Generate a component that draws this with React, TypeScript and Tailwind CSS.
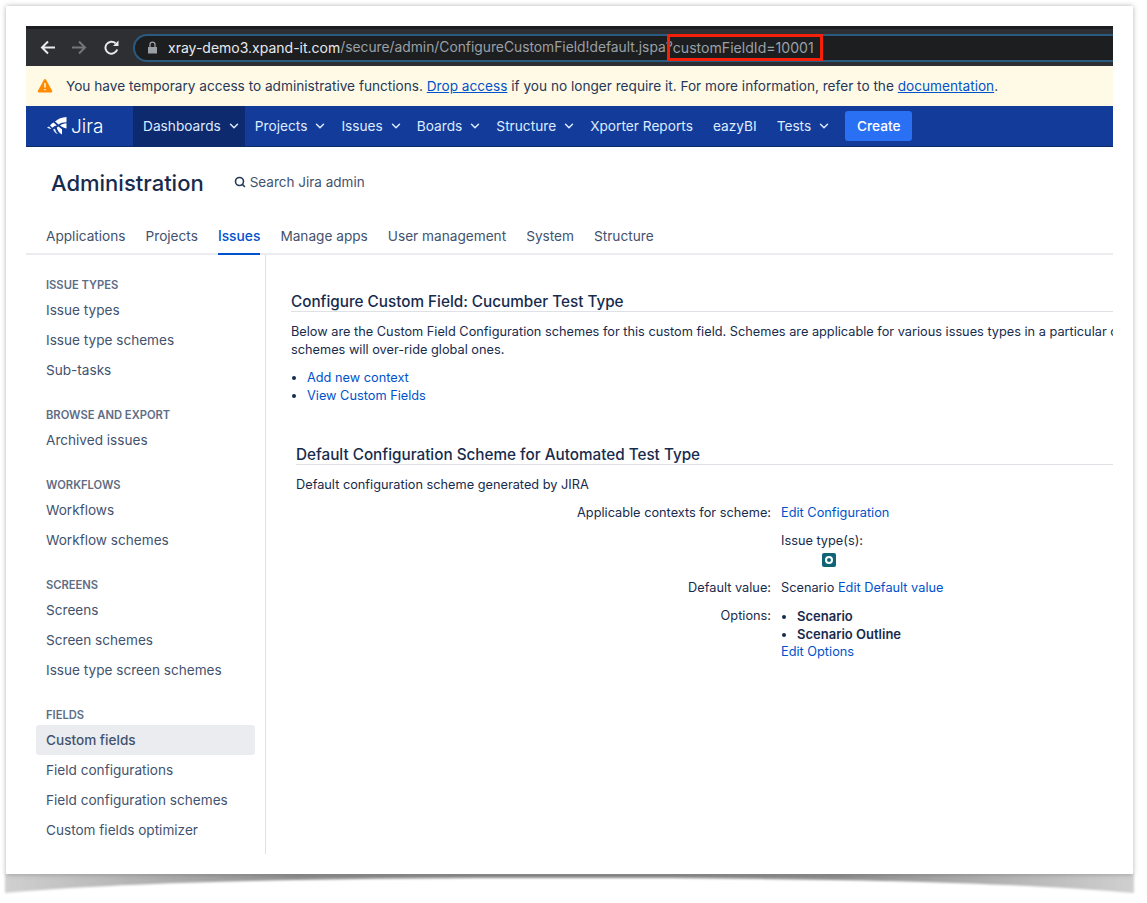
import { ChevronDown, Search } from "lucide-react";

const navItems = [
  { label: "Projects", menu: true },
  { label: "Issues", menu: true },
  { label: "Boards", menu: true },
  { label: "Structure", menu: true },
  { label: "Xporter Reports", menu: false },
  { label: "eazyBI", menu: false },
  { label: "Tests", menu: true },
];

const adminTabs = ["Applications", "Projects", "Issues", "Manage apps", "User management", "System", "Structure"];

const sideGroups = [
  { title: "ISSUE TYPES", items: ["Issue types", "Issue type schemes", "Sub-tasks"] },
  { title: "BROWSE AND EXPORT", items: ["Archived issues"] },
  { title: "WORKFLOWS", items: ["Workflows", "Workflow schemes"] },
  { title: "SCREENS", items: ["Screens", "Screen schemes", "Issue type screen schemes"] },
  { title: "FIELDS", items: ["Custom fields", "Field configurations", "Field configuration schemes", "Custom fields optimizer"] },
];

function BrowserBar() {
  return (
    <div className="flex h-10 items-center border-t-[3px] border-[#1d1e20] bg-[#2e2f33]">
      <div className="flex w-[107px] shrink-0 items-center pl-[14px]">
        <svg width="15" height="15" viewBox="0 0 15 15" fill="none" stroke="#e8eaed" strokeWidth="2" className="mr-[17px]">
          <path d="M15 7.500H2M8 1.500l-6 6 6 6" />
        </svg>
        <svg width="15" height="15" viewBox="0 0 15 15" fill="none" stroke="#75767a" strokeWidth="2" className="mr-[17px]">
          <path d="M0 7.500h13M7 1.500l6 6-6 6" />
        </svg>
        <svg width="15" height="15" viewBox="0 0 15 15" fill="none" stroke="#e8eaed" strokeWidth="2">
          <path d="M13.200 9.500A6 6 0 1 1 11.600 3.300" />
          <path d="M14.500 0.500v5.500H9z" fill="#e8eaed" stroke="none" />
        </svg>
      </div>
      <div className="flex h-7 min-w-0 flex-1 items-center overflow-hidden rounded-l-full border-y-2 border-l-2 border-[#2a5a80] bg-[#1d1e20] pl-[12px] text-[14px] whitespace-nowrap">
        <svg width="11" height="13" viewBox="0 0 11 13" className="mr-[10px] shrink-0" fill="#9aa0a6">
          <path d="M1 6h9v6.500H1z" />
          <path d="M3 6V3.600a2.500 2.500 0 0 1 5 0V6" fill="none" stroke="#9aa0a6" strokeWidth="1.300" />
        </svg>
        <span className="text-[#e8eaed]">xray-demo3.xpand-it.com</span>
        <span className="text-[13.8px] text-[#9aa0a6]">/secure/admin/ConfigureCustomField!default.jspa?</span>
        <span className="text-[14.1px] text-[#9aa0a6]">customFieldId=10001</span>
      </div>
    </div>
  );
}

function Notice() {
  return (
    <div className="flex h-10 items-center bg-[#fffae6] pl-[11px] text-[13.63px] text-[#253858]">
      <svg width="16" height="16" viewBox="0 0 16 16" className="mr-[13px] shrink-0">
        <path d="M6.900 1.700a1.300 1.300 0 0 1 2.200 0l6 11a1.300 1.300 0 0 1-1.100 1.900H2a1.300 1.300 0 0 1-1.100-1.900z" fill="#ff8b00" />
        <path d="M8 5v4.400M8 11v1.300" stroke="#fffae6" strokeWidth="1.500" />
      </svg>
      <span>
        You have temporary access to administrative functions.{" "}
        <span className="text-[#0052cc] underline">Drop access</span> if you no longer require it. For more information, refer to the{" "}
        <span className="text-[#0052cc] underline">documentation</span>.
      </span>
    </div>
  );
}

function TopNav() {
  return (
    <div className="flex h-[41px] items-stretch border-b border-[#0c2a66] bg-[#133b9a] text-[13.7px] text-[#deebff]">
      <div className="flex w-[107px] shrink-0 items-center pl-[21px]">
        <svg width="20" height="19" viewBox="0 0 20 19" fill="#ffffff" className="mr-[4px]">
          <path d="M19.500 0v5.200c-3.500 0-6 .8-8 2.300L8 4.500C11 1.800 15 .2 19.500 0z" />
          <path d="M6.500 5.500l3.400 3c-1.900.2-3.400 1-4.500 2.200L3 8.600c1-1.300 2.100-2.300 3.500-3.100z" />
          <path d="M2 9.500l2.300 2.300c-.7.200-1.400.1-2.300-.2L0 10.700c.6-.5 1.300-.9 2-1.200z" opacity=".9" />
          <path d="M19.500 6.300v5.200c-2.700-.4-4.700-1.400-6.500-2.900 1.700-1.400 4-2.300 6.500-2.300z" />
          <path d="M11.500 9.500c1.200 1.200 2.300 2 3.500 2.700v5.300c-2.700-1.500-4.500-3.800-5.200-6.800.4-.4 1-.9 1.700-1.200z" />
          <path d="M8 11.800c.6 2.300 1.500 4 3 5.200-2.400-.5-4-2.200-4.900-4.500.6-.3 1.200-.6 1.900-.7z" opacity=".85" />
        </svg>
        <span className="text-[19px] leading-none font-light text-white">Jira</span>
      </div>
      <div className="flex items-center gap-[6px] bg-[#0e2a6e] pr-[4px] pl-[10px]">
        Dashboards
        <ChevronDown size={14} strokeWidth={2.5} />
      </div>
      <div className="flex items-stretch">
        {navItems.map((item) => (
          <div key={item.label} className={item.menu ? "flex items-center gap-[6px] pr-[4px] pl-[10px]" : "flex items-center px-[10px]"}>
            {item.label}
            {item.menu && <ChevronDown size={14} strokeWidth={2.5} />}
          </div>
        ))}
      </div>
      <div className="ml-[10px] flex items-center">
        <div className="flex h-[30px] w-[67px] items-center justify-center rounded-[3px] bg-[#2a70f5] font-medium text-white">Create</div>
      </div>
    </div>
  );
}

function AdminHeader() {
  return (
    <div>
      <div className="flex h-[72px] items-center pl-[25px]">
        <div className="text-[22px] font-medium text-[#172b4d]">Administration</div>
        <div className="ml-[30px] flex items-center pb-[2px] text-[13.5px] text-[#42526e]">
          <Search size={12} strokeWidth={3.2} className="mr-[4px] text-[#253858]" />
          Search Jira admin
        </div>
      </div>
      <div className="flex h-[36px] gap-[20px] border-b-2 border-[#ebecf0] pl-[20px] text-[13.65px] text-[#42526e]">
        {adminTabs.map((tab, i) => (
          <div
            key={tab + i}
            className={
              tab === "Issues"
                ? "mb-[-2px] flex items-center border-b-2 border-[#0052cc] text-[13.8px] font-medium text-[#0052cc]"
                : "flex items-center"
            }
          >
            {tab}
          </div>
        ))}
      </div>
    </div>
  );
}

function Sidebar() {
  return (
    <div className="h-[600px] w-[240px] shrink-0 border-r border-[#dfe1e6] px-[10px] pt-[20px]">
      {sideGroups.map((group) => (
        <div key={group.title} className="mb-[20px]">
          <div className="flex h-[20px] items-center pl-[10px] text-[11.2px] font-semibold text-[#5e6c84]">{group.title}</div>
          {group.items.map((item) => (
            <div
              key={item}
              className={
                item === "Custom fields"
                  ? "flex h-[30px] items-center rounded-[3px] bg-[#ebecf0] pl-[10px] text-[13.6px] font-medium text-[#42526e]"
                  : "flex h-[30px] items-center pl-[10px] text-[13.6px] text-[#42526e]"
              }
            >
              {item}
            </div>
          ))}
        </div>
      ))}
    </div>
  );
}

function FormRow({ label, children }: { label: string; children: React.ReactNode }) {
  return (
    <div className="flex">
      <div className="w-[485px] shrink-0 pr-[10px] text-right">{label}</div>
      <div className="min-w-0">{children}</div>
    </div>
  );
}

function Main() {
  return (
    <div className="min-w-0 flex-1 overflow-hidden text-[12.75px] leading-[18px] text-[#172b4d]">
      <div className="mt-[37px] ml-[25px] border-b border-[#dfe1e6] text-[15.28px] leading-[19px] font-medium">Configure Custom Field: Cucumber Test Type</div>
      <div className="mt-[11px] ml-[25px] whitespace-nowrap">
        Below are the Custom Field Configuration schemes for this custom field. Schemes are applicable for various issues types in a particular context. Global
        <br />
        schemes will over-ride global ones.
      </div>
      <ul className="mt-[10px] ml-[25px] list-disc pl-[16px] text-[#0052cc] marker:text-[#172b4d]">
        <li>Add new context</li>
        <li>View Custom Fields</li>
      </ul>
      <div className="mt-[40px] ml-[30px] border-b border-[#dfe1e6] text-[15.28px] leading-[19px] font-medium">Default Configuration Scheme for Automated Test Type</div>
      <div className="mt-[11px] ml-[30px]">Default configuration scheme generated by JIRA</div>
      <div className="mt-[10px] ml-[30px]">
        <FormRow label="Applicable contexts for scheme:">
          <span className="text-[#0052cc]">Edit Configuration</span>
        </FormRow>
        <div className="mt-[10px]">
          <FormRow label="">
            <div>Issue type(s):</div>
            <div className="mt-[3px] ml-[41px] flex size-[14px] items-center justify-center rounded-[2px] bg-[#0f6575]">
              <div className="size-[8px] rounded-full border-2 border-white" />
            </div>
          </FormRow>
        </div>
        <div className="mt-[12px]">
          <FormRow label="Default value:">
            Scenario <span className="text-[#0052cc]">Edit Default value</span>
          </FormRow>
        </div>
        <div className="mt-[10px]">
          <FormRow label="Options:">
            <ul className="list-disc pl-[16px] text-[13px] font-semibold">
              <li>Scenario</li>
              <li>Scenario Outline</li>
            </ul>
            <div className="text-[#0052cc]">Edit Options</div>
          </FormRow>
        </div>
      </div>
    </div>
  );
}

export default function App() {
  return (
    <div className="relative h-[903px] w-[1147px] overflow-hidden bg-white font-['Inter',sans-serif]">
      {/* curved drop shadow below the sheet */}
      <svg width="1147" height="40" viewBox="0 0 1147 40" className="absolute top-[868px] left-0">
        <defs>
          <linearGradient id="edge" x1="0" x2="1" y1="0" y2="0">
            <stop offset="0" stopColor="#d0d0d0" />
            <stop offset="0.26" stopColor="#909090" />
            <stop offset="0.74" stopColor="#909090" />
            <stop offset="1" stopColor="#d0d0d0" />
          </linearGradient>
          <filter id="soft">
            <feGaussianBlur stdDeviation="1" />
          </filter>
        </defs>
        <path d="M5 5H1134V25C1000 13 800 10 570 10S140 13 5 25Z" fill="url(#edge)" filter="url(#soft)" />
      </svg>
      <div className="relative m-[6px] h-[868px] w-[1127px] bg-white p-[20px] shadow-[0_0_5px_rgba(0,0,0,0.3)]">
        <div className="h-[828px] w-[1087px] overflow-hidden">
          <BrowserBar />
          <Notice />
          <TopNav />
          <AdminHeader />
          <div className="flex">
            <Sidebar />
            <Main />
          </div>
        </div>
        {/* red highlight around the query string */}
        <div className="absolute top-[28px] left-[661px] h-[27px] w-[156px] border-[3px] border-[#f5200a]" />
      </div>
    </div>
  );
}
